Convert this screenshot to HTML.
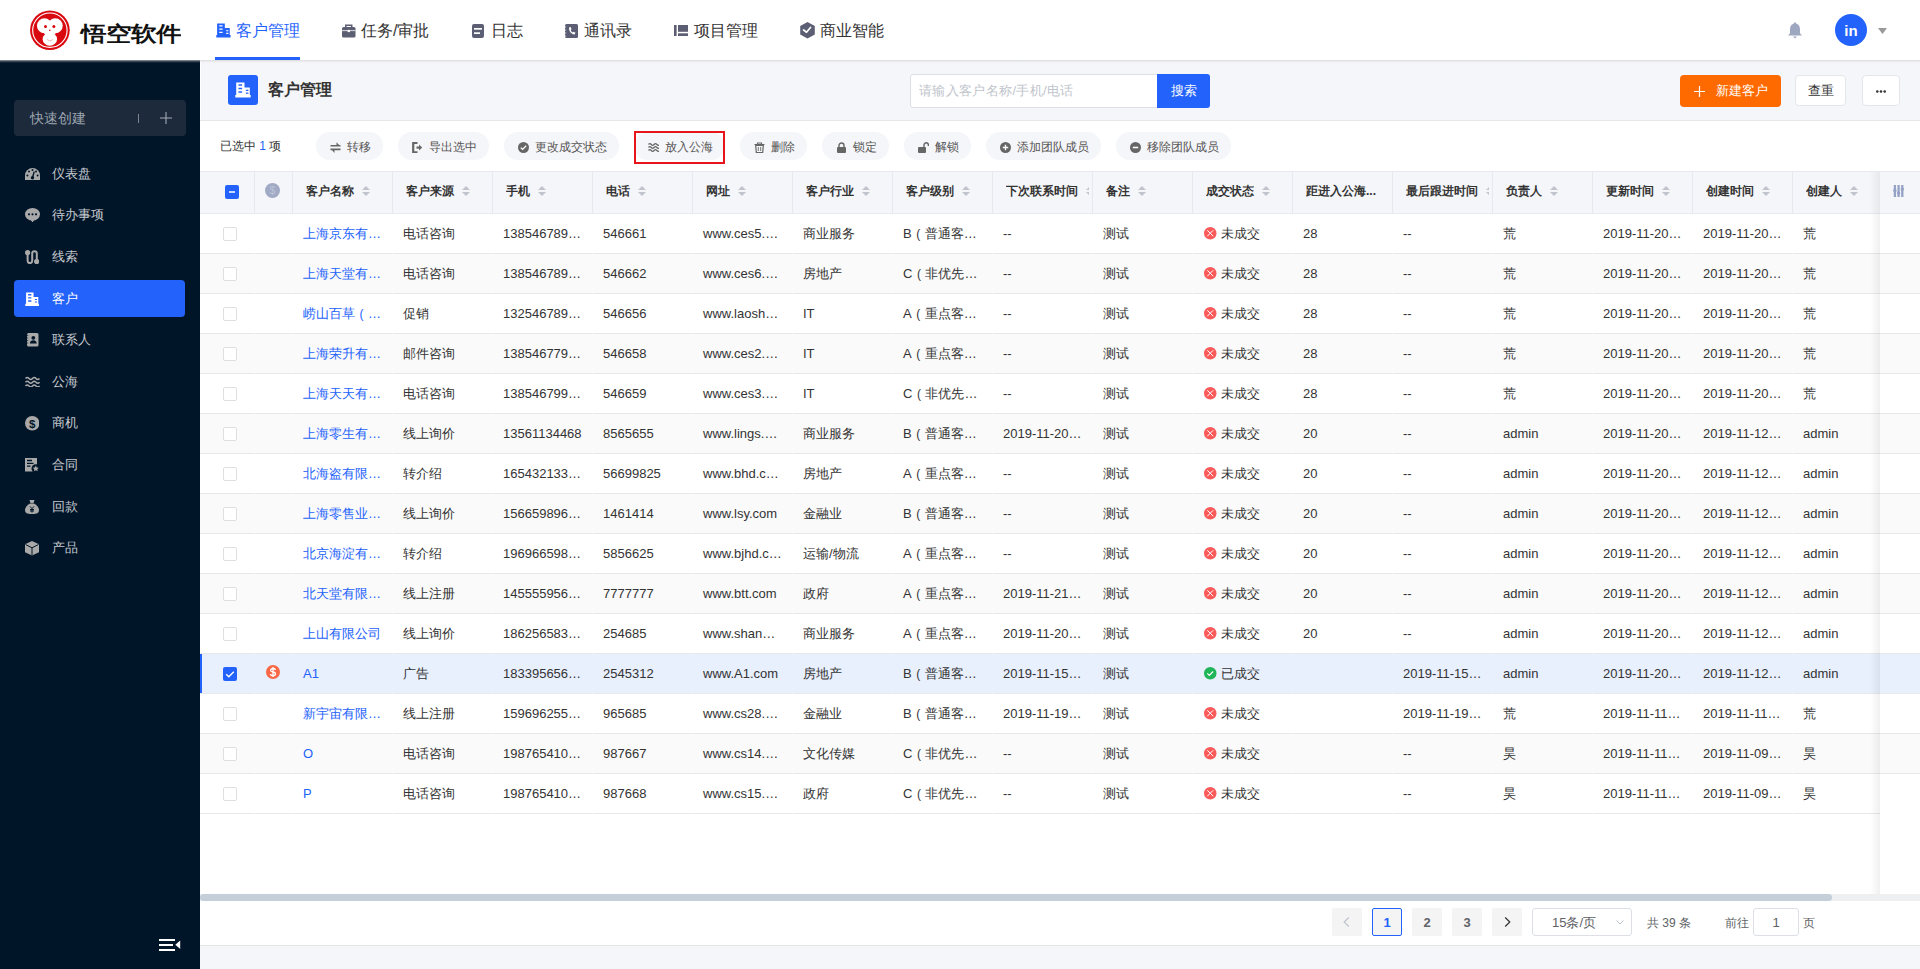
<!DOCTYPE html><html><head><meta charset="utf-8"><style>
html,body{margin:0;padding:0}
body{width:1920px;height:969px;overflow:hidden;position:relative;background:#f5f6f9;font-family:"Liberation Sans",sans-serif;}
.t{position:absolute;white-space:nowrap}
.b{position:absolute;box-sizing:border-box}
</style></head><body>
<div class="b" style="left:0px;top:0px;width:1920px;height:60px;background:#fff;z-index:2"></div>
<div style="position:absolute;left:0;top:0;width:1920px;height:60px;z-index:3">
<svg class="b" style="left:30px;top:10px;" width="40" height="40" viewBox="0 0 40 40"><circle cx="19.9" cy="20.2" r="19.8" fill="#d8090f"/>
<circle cx="19.9" cy="20.2" r="17.2" fill="none" stroke="#fff" stroke-width="1.1"/>
<circle cx="14.45" cy="15.7" r="7.5" fill="#fff"/><circle cx="25.25" cy="15.7" r="7.5" fill="#fff"/>
<ellipse cx="19.85" cy="20.5" rx="6.5" ry="5.5" fill="#fff"/>
<ellipse cx="19.85" cy="29.2" rx="7.2" ry="6.6" fill="#fff"/>
<circle cx="15.5" cy="16.6" r="1.5" fill="#d8090f"/><circle cx="23.9" cy="16.6" r="1.5" fill="#d8090f"/>
<circle cx="19.8" cy="20.3" r="0.8" fill="#d8090f"/>
<path d="M17.2 29.6 Q19.9 32.6 22.8 29.6" stroke="#e57a80" stroke-width="0.6" fill="none"/></svg>
<div class="t" style="left:81px;top:19.5px;font-size:25px;line-height:34px;color:#111;font-weight:bold;letter-spacing:0px;transform:scale(1.0,0.82);transform-origin:0 0">悟空软件</div>
<div class="t" style="left:236.0px;top:21px;font-size:16px;line-height:20px;color:#2362fb;font-weight:normal;">客户管理</div>
<div class="t" style="left:361.0px;top:21px;font-size:16px;line-height:20px;color:#333;font-weight:normal;">任务/审批</div>
<div class="t" style="left:491.3px;top:21px;font-size:16px;line-height:20px;color:#333;font-weight:normal;">日志</div>
<div class="t" style="left:583.6999999999999px;top:21px;font-size:16px;line-height:20px;color:#333;font-weight:normal;">通讯录</div>
<div class="t" style="left:693.5px;top:21px;font-size:16px;line-height:20px;color:#333;font-weight:normal;">项目管理</div>
<div class="t" style="left:820.1999999999999px;top:21px;font-size:16px;line-height:20px;color:#333;font-weight:normal;">商业智能</div>
<div class="b" style="left:215px;top:57px;width:85px;height:3px;background:#2362fb"></div>
<svg class="b" style="left:216px;top:23px;" width="14.88" height="14.88" viewBox="0 0 16 16"><path d="M1.2 0.5h8.3v13H1.2z M9.5 5.5h5.3v8H9.5z M0.3 13h15.4v2.5H0.3z" fill="#2362fb"/><path d="M3.5 2.3h3.6v1.5H3.5zM3.5 5.8h3.6v1.5H3.5zM3.5 9.3h3.6v1.5H3.5zM10.9 7.8h2.5v1.2h-2.5zM10.9 10.5h2.5v1.2h-2.5z" fill="#fff"/></svg>
<svg class="b" style="left:342px;top:24px;" width="13.5" height="13.5" viewBox="0 0 13.5 13.5"><path d="M3.8 3V1.2h5.9V3" stroke="#5c5f73" stroke-width="1.6" fill="none"/><rect x="0" y="3" width="13.5" height="10.5" rx="1.6" fill="#5c5f73"/><rect x="0" y="6.3" width="13.5" height=".8" fill="#fff"/><circle cx="6.75" cy="7" r="1.3" fill="#fff"/></svg>
<svg class="b" style="left:472px;top:23.5px;" width="12" height="14" viewBox="0 0 12 14"><rect x="0" y="0" width="12" height="14" rx="2" fill="#5c5f73"/><rect x="2" y="4" width="8" height="1.7" fill="#fff"/><rect x="2" y="8.3" width="6" height="1.7" fill="#fff"/></svg>
<svg class="b" style="left:565px;top:24px;" width="13" height="14" viewBox="0 0 13 14"><rect x="0" y="0" width="13" height="14" rx="1.5" fill="#5c5f73"/><path d="M4 3.5c0 4 2 6.5 5.5 7l1-1.8-2-1-.8.8c-1-.6-1.7-1.5-2-2.6l.8-.7-.8-2.2z" fill="#fff"/><path d="M0 3h1.2M0 6h1.2M0 9h1.2M0 12h1.2" stroke="#fff" stroke-width=".8"/></svg>
<svg class="b" style="left:674px;top:24.5px;" width="14" height="11.5" viewBox="0 0 14 11.5"><rect x="0" y="0" width="2.6" height="11.5" fill="#5c5f73"/><rect x="4" y="0" width="10" height="6.8" fill="#5c5f73"/><rect x="4" y="8.3" width="10" height="3.2" fill="#5c5f73"/></svg>
<svg class="b" style="left:800px;top:22px;" width="15" height="16.5" viewBox="0 0 15 16.5"><path d="M7.5 0L14.8 4.1v8.3L7.5 16.5 0.2 12.4V4.1z" fill="#5c5f73"/><path d="M3.6 8l2.9 2.2 4-4.7" stroke="#fff" stroke-width="1.7" fill="none" stroke-linejoin="round" stroke-linecap="round"/></svg>
<svg class="b" style="left:1787px;top:22px;" width="16" height="17" viewBox="0 0 16 17"><path d="M8 0.5c-.8 0-1.3.6-1.3 1.2C4 2.4 3 4.6 3 7.5v3.8L1 13.6h14l-2-2.3V7.5c0-2.9-1-5.1-3.7-5.8 0-.6-.5-1.2-1.3-1.2z" fill="#9ea7c0"/><path d="M6 14.5h4L8 16.5z" fill="#9ea7c0"/></svg>
<div class="b" style="left:1835px;top:14px;width:32px;height:32px;background:#2362fb;border-radius:50%"></div>
<div class="t" style="left:1835px;top:20.5px;font-size:15px;line-height:20px;color:#fff;font-weight:bold;width:32px;text-align:center">in</div>
<svg class="b" style="left:1878px;top:28px;" width="9" height="6" viewBox="0 0 9 6"><path d="M0 0h9L4.5 6z" fill="#999"/></svg>
</div>
<div class="b" style="left:0px;top:60px;width:200px;height:909px;background:#011529"></div>
<div class="b" style="left:14px;top:100px;width:172px;height:36px;background:#1c2a3c;border-radius:4px"></div>
<div class="t" style="left:29.5px;top:108px;font-size:14px;line-height:20px;color:#9ea5af;font-weight:normal;">快速创建</div>
<div class="b" style="left:138px;top:114px;width:1px;height:9px;background:#7d848e"></div>
<svg class="b" style="left:160px;top:112px;" width="12" height="12" viewBox="0 0 12 12"><path d="M6 0v12M0 6h12" stroke="#a3aab4" stroke-width="1.1"/></svg>
<div class="b" style="left:14px;top:280px;width:171px;height:37px;background:#2362fb;border-radius:4px"></div>
<div class="t" style="left:51.5px;top:164px;font-size:13px;line-height:20px;color:#c6c9ce;font-weight:normal;">仪表盘</div>
<div class="t" style="left:51.5px;top:205px;font-size:13px;line-height:20px;color:#c6c9ce;font-weight:normal;">待办事项</div>
<div class="t" style="left:51.5px;top:247px;font-size:13px;line-height:20px;color:#c6c9ce;font-weight:normal;">线索</div>
<div class="t" style="left:51.5px;top:289px;font-size:13px;line-height:20px;color:#fff;font-weight:normal;">客户</div>
<div class="t" style="left:51.5px;top:330px;font-size:13px;line-height:20px;color:#c6c9ce;font-weight:normal;">联系人</div>
<div class="t" style="left:51.5px;top:372px;font-size:13px;line-height:20px;color:#c6c9ce;font-weight:normal;">公海</div>
<div class="t" style="left:51.5px;top:413px;font-size:13px;line-height:20px;color:#c6c9ce;font-weight:normal;">商机</div>
<div class="t" style="left:51.5px;top:455px;font-size:13px;line-height:20px;color:#c6c9ce;font-weight:normal;">合同</div>
<div class="t" style="left:51.5px;top:497px;font-size:13px;line-height:20px;color:#c6c9ce;font-weight:normal;">回款</div>
<div class="t" style="left:51.5px;top:538px;font-size:13px;line-height:20px;color:#c6c9ce;font-weight:normal;">产品</div>
<svg class="b" style="left:24.5px;top:167.5px;" width="15" height="12.5" viewBox="0 0 15 12.5"><path d="M0 11.5V7.5A7.5 7.5 0 0 1 15 7.5V11.5Q15 12.5 14 12.5H1Q0 12.5 0 11.5z" fill="#a9a9a9"/><circle cx="2.4" cy="7.6" r="1" fill="#011529"/><circle cx="4" cy="3.6" r="1" fill="#011529"/><circle cx="7.5" cy="2" r="1" fill="#011529"/><circle cx="11" cy="3.6" r="1" fill="#011529"/><circle cx="12.6" cy="7.6" r="1" fill="#011529"/><path d="M7.5 9.8L9.2 3.6" stroke="#011529" stroke-width="1.4"/><circle cx="7.5" cy="9.8" r="1.7" fill="#011529"/></svg>
<svg class="b" style="left:24.5px;top:207.5px;" width="15" height="14.5" viewBox="0 0 15 14.5"><ellipse cx="7.5" cy="6.3" rx="7.5" ry="6.3" fill="#a9a9a9"/><path d="M5.5 11.5h4l-2 3z" fill="#a9a9a9"/><circle cx="4" cy="6.3" r="1.1" fill="#011529"/><circle cx="7.5" cy="6.3" r="1.1" fill="#011529"/><circle cx="11" cy="6.3" r="1.1" fill="#011529"/></svg>
<svg class="b" style="left:25px;top:249.5px;" width="14" height="14.5" viewBox="0 0 14 14.5"><path d="M2.6 3V10.8a2.3 2.3 0 0 0 4.6 0V3.6a2.3 2.3 0 0 1 4.6 0V10.5" stroke="#a9a9a9" stroke-width="2" fill="none"/><circle cx="2.6" cy="2.6" r="2.6" fill="#a9a9a9"/><circle cx="11.6" cy="11.6" r="2.6" fill="#a9a9a9"/></svg>
<svg class="b" style="left:25px;top:292px;" width="14.4" height="14.4" viewBox="0 0 16 16"><path d="M1.2 0.5h8.3v13H1.2z M9.5 5.5h5.3v8H9.5z M0.3 13h15.4v2.5H0.3z" fill="#fff"/><path d="M3.5 2.3h3.6v1.5H3.5zM3.5 5.8h3.6v1.5H3.5zM3.5 9.3h3.6v1.5H3.5zM10.9 7.8h2.5v1.2h-2.5zM10.9 10.5h2.5v1.2h-2.5z" fill="#2362fb"/></svg>
<svg class="b" style="left:26px;top:333px;" width="12.5" height="13.5" viewBox="0 0 12.5 13.5"><rect x="1" y="0" width="11.5" height="13.5" rx="1.5" fill="#a9a9a9"/><circle cx="7.3" cy="4.8" r="1.9" fill="#011529"/><path d="M3.8 10.5c.4-2.3 1.7-3.3 3.5-3.3s3.1 1 3.5 3.3z" fill="#011529"/><path d="M0 2.5h2.2M0 5h2.2M0 7.5h2.2M0 10h2.2" stroke="#011529" stroke-width=".7"/></svg>
<svg class="b" style="left:24.5px;top:375.5px;" width="15" height="11.5" viewBox="0 0 15 11.5"><path d="M0.5 2.5q1.7-2 3.5 0t3.5 0 3.5 0 3.5 0M0.5 6.2q1.7-2 3.5 0t3.5 0 3.5 0 3.5 0M0.5 9.9q1.7-2 3.5 0t3.5 0 3.5 0 3.5 0" stroke="#a9a9a9" stroke-width="1.5" fill="none"/></svg>
<svg class="b" style="left:24.5px;top:416px;" width="14.5" height="14.5" viewBox="0 0 14.5 14.5"><circle cx="7.25" cy="7.25" r="7.25" fill="#a9a9a9"/><text x="7.25" y="11.5" font-size="11.5" text-anchor="middle" fill="#011529" font-family="Liberation Sans" font-weight="bold">$</text></svg>
<svg class="b" style="left:25px;top:458px;" width="14.5" height="14" viewBox="0 0 14.5 14"><path d="M0 0h12v13.5H0z" fill="#a9a9a9"/><path d="M2 2.5h5M2 5.3h6.5M2 8.1h3.5" stroke="#011529" stroke-width="1.3"/><circle cx="10.8" cy="10.6" r="4.3" fill="#011529"/><path d="M10.8 7.6l.95 1.9 2.05.3-1.5 1.45.35 2.05-1.85-1-1.85 1 .35-2.05-1.5-1.45 2.05-.3z" fill="#a9a9a9"/></svg>
<svg class="b" style="left:25px;top:500px;" width="14" height="14" viewBox="0 0 14 14"><path d="M4.5 0h5L8.5 3h-3z" fill="#a9a9a9"/><path d="M5 3.5h4c3 1.5 5 4 5 6.5 0 3-2 4-7 4s-7-1-7-4c0-2.5 2-5 5-6.5z" fill="#a9a9a9"/><path d="M5 6.5l2 2 2-2M7 8.5v4M5 9.5h4M5 11h4" stroke="#011529" stroke-width="1" fill="none"/></svg>
<svg class="b" style="left:25px;top:541px;" width="14" height="14.5" viewBox="0 0 14 14.5"><path d="M7 0L14 3.3v8L7 14.5 0 11.3v-8z" fill="#a9a9a9"/><path d="M0.5 3.5L7 6.8 13.5 3.5M7 6.8v7.5" stroke="#011529" stroke-width="1" fill="none"/></svg>
<svg class="b" style="left:159px;top:938px;" width="22" height="14" viewBox="0 0 22 14"><path d="M0 2h16M0 7h14M0 12h16" stroke="#fff" stroke-width="2"/><path d="M21.2 2.6v8.5l-4.9-4.25z" fill="#fff"/></svg>
<div class="b" style="left:0px;top:60px;width:1920px;height:3px;background:linear-gradient(rgba(208,208,208,0.75),rgba(208,208,208,0.25) 50%,rgba(208,208,208,0));z-index:4"></div>
<div class="b" style="left:200px;top:60px;width:1px;height:885px;background:#fff"></div>
<div class="b" style="left:228px;top:75px;width:30px;height:30px;background:#2362fb;border-radius:3px"></div>
<svg class="b" style="left:235px;top:82px;" width="16.0" height="16.0" viewBox="0 0 16 16"><path d="M1.2 0.5h8.3v13H1.2z M9.5 5.5h5.3v8H9.5z M0.3 13h15.4v2.5H0.3z" fill="#fff"/><path d="M3.5 2.3h3.6v1.5H3.5zM3.5 5.8h3.6v1.5H3.5zM3.5 9.3h3.6v1.5H3.5zM10.9 7.8h2.5v1.2h-2.5zM10.9 10.5h2.5v1.2h-2.5z" fill="#2362fb"/></svg>
<div class="t" style="left:267.5px;top:80px;font-size:16px;line-height:20px;color:#333;font-weight:bold;">客户管理</div>
<div class="b" style="left:910px;top:74px;width:248px;height:34px;background:#fff;border:1px solid #dcdfe6;border-radius:3px 0 0 3px"></div>
<div class="t" style="left:919px;top:81px;font-size:13px;line-height:20px;color:#c0c4cc;font-weight:normal;letter-spacing:0.35px">请输入客户名称/手机/电话</div>
<div class="b" style="left:1157px;top:74px;width:53px;height:34px;background:#2362fb;border-radius:0 3px 3px 0"></div>
<div class="t" style="left:1157px;top:81px;font-size:13px;line-height:20px;color:#fff;font-weight:normal;width:53px;text-align:center">搜索</div>
<div class="b" style="left:1680px;top:75px;width:101px;height:32px;background:#ff6a00;border-radius:4px"></div>
<svg class="b" style="left:1694px;top:86px;" width="11" height="11" viewBox="0 0 11 11"><path d="M5.5 0v11M0 5.5h11" stroke="#fff" stroke-width="1.2"/></svg>
<div class="t" style="left:1715.5px;top:81px;font-size:13px;line-height:20px;color:#fff;font-weight:normal;">新建客户</div>
<div class="b" style="left:1795px;top:75px;width:51px;height:31px;background:#fff;border:1px solid #e4e6ea;border-radius:4px"></div>
<div class="t" style="left:1795px;top:80.5px;font-size:13px;line-height:20px;color:#333;font-weight:normal;width:51px;text-align:center">查重</div>
<div class="b" style="left:1862px;top:75px;width:38px;height:31px;background:#fff;border:1px solid #e4e6ea;border-radius:4px"></div>
<svg class="b" style="left:1876px;top:89.5px;" width="10" height="3" viewBox="0 0 10 3"><circle cx="1.3" cy="1.5" r="1.3" fill="#333"/><circle cx="5" cy="1.5" r="1.3" fill="#333"/><circle cx="8.7" cy="1.5" r="1.3" fill="#333"/></svg>
<div class="b" style="left:200px;top:120px;width:1720px;height:826px;background:#fff;border-top:1px solid #e6e6e6;border-bottom:1px solid #e6e6e6"></div>
<div class="t" style="left:220px;top:136px;font-size:12px;line-height:20px;color:#333">已选中 <span style="color:#2362fb">1</span> 项</div>
<div class="b" style="left:316px;top:132px;width:67px;height:28px;background:#f5f6f9;border-radius:14px"></div>
<svg class="b" style="left:330px;top:142px;" width="11" height="11" viewBox="0 0 11 11"><path d="M0.5 3h10v1.6H0.5z M6.5 0.2L10.5 4.6H6.5z M0.5 6.6h10v1.6H0.5z M4.5 10.9L0.5 6.6H4.5z" fill="#666"/></svg>
<div class="t" style="left:346.5px;top:137px;font-size:12px;line-height:20px;color:#555;font-weight:normal;">转移</div>
<div class="b" style="left:398px;top:132px;width:91px;height:28px;background:#f5f6f9;border-radius:14px"></div>
<svg class="b" style="left:412px;top:142px;" width="11" height="11" viewBox="0 0 11 11"><path d="M5.5 0.8H1.2v9.6h4.3" stroke="#666" stroke-width="2.2" fill="none" stroke-linejoin="round"/><path d="M4.5 5.6h3" stroke="#666" stroke-width="2.2"/><path d="M7 2.6l3.2 3-3.2 3z" fill="#666"/></svg>
<div class="t" style="left:428.5px;top:137px;font-size:12px;line-height:20px;color:#555;font-weight:normal;">导出选中</div>
<div class="b" style="left:504px;top:132px;width:115px;height:28px;background:#f5f6f9;border-radius:14px"></div>
<svg class="b" style="left:518px;top:142px;" width="11" height="11" viewBox="0 0 11 11"><circle cx="5.5" cy="5.5" r="5.5" fill="#666"/><path d="M2.8 5.6l1.8 1.8 3.6-3.6" stroke="#fff" stroke-width="1.3" fill="none"/></svg>
<div class="t" style="left:534.5px;top:137px;font-size:12px;line-height:20px;color:#555;font-weight:normal;">更改成交状态</div>
<div class="b" style="left:634px;top:132px;width:91px;height:28px;background:#f5f6f9;border-radius:14px"></div>
<svg class="b" style="left:648px;top:142px;" width="11" height="11" viewBox="0 0 11 11"><path d="M0.5 2.5q1.4-1.6 2.8 0t2.8 0 2.8 0 2.6 0M0.5 5.5q1.4-1.6 2.8 0t2.8 0 2.8 0 2.6 0M0.5 8.5q1.4-1.6 2.8 0t2.8 0 2.8 0 2.6 0" stroke="#666" stroke-width="1.2" fill="none"/></svg>
<div class="t" style="left:664.5px;top:137px;font-size:12px;line-height:20px;color:#555;font-weight:normal;">放入公海</div>
<div class="b" style="left:740px;top:132px;width:67px;height:28px;background:#f5f6f9;border-radius:14px"></div>
<svg class="b" style="left:754px;top:142px;" width="11" height="11" viewBox="0 0 11 11"><path d="M0.5 2.5h10M3.5 2.5V1h4v1.5" stroke="#666" stroke-width="1.1" fill="none"/><path d="M1.7 3.5h7.6l-.6 7H2.3z" stroke="#666" stroke-width="1.2" fill="none"/><path d="M4.3 5v4M6.7 5v4" stroke="#666" stroke-width=".9"/></svg>
<div class="t" style="left:770.5px;top:137px;font-size:12px;line-height:20px;color:#555;font-weight:normal;">删除</div>
<div class="b" style="left:822px;top:132px;width:67px;height:28px;background:#f5f6f9;border-radius:14px"></div>
<svg class="b" style="left:836px;top:142px;" width="11" height="11" viewBox="0 0 11 11"><path d="M3 5V3.5a2.5 2.5 0 0 1 5 0V5" stroke="#666" stroke-width="1.4" fill="none"/><rect x="1" y="5" width="9" height="6" rx="1" fill="#666"/></svg>
<div class="t" style="left:852.5px;top:137px;font-size:12px;line-height:20px;color:#555;font-weight:normal;">锁定</div>
<div class="b" style="left:904px;top:132px;width:67px;height:28px;background:#f5f6f9;border-radius:14px"></div>
<svg class="b" style="left:918px;top:142px;" width="11" height="11" viewBox="0 0 11 11"><path d="M6 5V3a2.2 2.2 0 0 1 4.4 0V4" stroke="#666" stroke-width="1.4" fill="none"/><rect x="0" y="5" width="8" height="6" rx="1" fill="#666"/></svg>
<div class="t" style="left:934.5px;top:137px;font-size:12px;line-height:20px;color:#555;font-weight:normal;">解锁</div>
<div class="b" style="left:986px;top:132px;width:115px;height:28px;background:#f5f6f9;border-radius:14px"></div>
<svg class="b" style="left:1000px;top:142px;" width="11" height="11" viewBox="0 0 11 11"><circle cx="5.5" cy="5.5" r="5.5" fill="#666"/><path d="M5.5 2.8v5.4M2.8 5.5h5.4" stroke="#fff" stroke-width="1.4"/></svg>
<div class="t" style="left:1016.5px;top:137px;font-size:12px;line-height:20px;color:#555;font-weight:normal;">添加团队成员</div>
<div class="b" style="left:1116px;top:132px;width:115px;height:28px;background:#f5f6f9;border-radius:14px"></div>
<svg class="b" style="left:1130px;top:142px;" width="11" height="11" viewBox="0 0 11 11"><circle cx="5.5" cy="5.5" r="5.5" fill="#666"/><path d="M2.8 5.5h5.4" stroke="#fff" stroke-width="1.6"/></svg>
<div class="t" style="left:1146.5px;top:137px;font-size:12px;line-height:20px;color:#555;font-weight:normal;">移除团队成员</div>
<div class="b" style="left:634px;top:131px;width:91px;height:33px;border:2px solid #e8141b"></div>
<div class="b" style="left:200px;top:171px;width:1720px;height:43px;background:#f5f6f9;border-top:1px solid #e6e9ef;border-bottom:1px solid #e6e9ef"></div>
<div class="b" style="left:254px;top:172px;width:1px;height:41px;background:#e6e9ef"></div>
<div class="b" style="left:292px;top:172px;width:1px;height:41px;background:#e6e9ef"></div>
<div class="b" style="left:392px;top:172px;width:1px;height:41px;background:#e6e9ef"></div>
<div class="b" style="left:492px;top:172px;width:1px;height:41px;background:#e6e9ef"></div>
<div class="b" style="left:592px;top:172px;width:1px;height:41px;background:#e6e9ef"></div>
<div class="b" style="left:692px;top:172px;width:1px;height:41px;background:#e6e9ef"></div>
<div class="b" style="left:792px;top:172px;width:1px;height:41px;background:#e6e9ef"></div>
<div class="b" style="left:892px;top:172px;width:1px;height:41px;background:#e6e9ef"></div>
<div class="b" style="left:992px;top:172px;width:1px;height:41px;background:#e6e9ef"></div>
<div class="b" style="left:1092px;top:172px;width:1px;height:41px;background:#e6e9ef"></div>
<div class="b" style="left:1192px;top:172px;width:1px;height:41px;background:#e6e9ef"></div>
<div class="b" style="left:1292px;top:172px;width:1px;height:41px;background:#e6e9ef"></div>
<div class="b" style="left:1392px;top:172px;width:1px;height:41px;background:#e6e9ef"></div>
<div class="b" style="left:1492px;top:172px;width:1px;height:41px;background:#e6e9ef"></div>
<div class="b" style="left:1592px;top:172px;width:1px;height:41px;background:#e6e9ef"></div>
<div class="b" style="left:1692px;top:172px;width:1px;height:41px;background:#e6e9ef"></div>
<div class="b" style="left:1792px;top:172px;width:1px;height:41px;background:#e6e9ef"></div>
<div class="b" style="left:225px;top:185px;width:14px;height:14px;background:#2362fb;border-radius:2px"></div>
<div class="b" style="left:229px;top:191px;width:6px;height:2px;background:#c8d6ff"></div>
<svg class="b" style="left:265.3px;top:183.3px;" width="15" height="15" viewBox="0 0 15 15"><circle cx="7.5" cy="7.5" r="7.5" fill="#a0aac4"/><text x="7.5" y="11.3" font-size="10.5" text-anchor="middle" fill="#bcc4d8" font-family="Liberation Sans">$</text></svg>
<div class="t" style="left:306px;top:181px;width:83px;overflow:hidden;font-size:12px;line-height:20px;color:#333;font-weight:bold">客户名称<svg width="8" height="10" style="margin-left:7.5px;vertical-align:-1px" viewBox="0 0 8 10"><path d="M0 4L4 0 8 4z M0 6h8L4 10z" fill="#c0c4cc"/></svg></div>
<div class="t" style="left:406px;top:181px;width:83px;overflow:hidden;font-size:12px;line-height:20px;color:#333;font-weight:bold">客户来源<svg width="8" height="10" style="margin-left:7.5px;vertical-align:-1px" viewBox="0 0 8 10"><path d="M0 4L4 0 8 4z M0 6h8L4 10z" fill="#c0c4cc"/></svg></div>
<div class="t" style="left:506px;top:181px;width:83px;overflow:hidden;font-size:12px;line-height:20px;color:#333;font-weight:bold">手机<svg width="8" height="10" style="margin-left:7.5px;vertical-align:-1px" viewBox="0 0 8 10"><path d="M0 4L4 0 8 4z M0 6h8L4 10z" fill="#c0c4cc"/></svg></div>
<div class="t" style="left:606px;top:181px;width:83px;overflow:hidden;font-size:12px;line-height:20px;color:#333;font-weight:bold">电话<svg width="8" height="10" style="margin-left:7.5px;vertical-align:-1px" viewBox="0 0 8 10"><path d="M0 4L4 0 8 4z M0 6h8L4 10z" fill="#c0c4cc"/></svg></div>
<div class="t" style="left:706px;top:181px;width:83px;overflow:hidden;font-size:12px;line-height:20px;color:#333;font-weight:bold">网址<svg width="8" height="10" style="margin-left:7.5px;vertical-align:-1px" viewBox="0 0 8 10"><path d="M0 4L4 0 8 4z M0 6h8L4 10z" fill="#c0c4cc"/></svg></div>
<div class="t" style="left:806px;top:181px;width:83px;overflow:hidden;font-size:12px;line-height:20px;color:#333;font-weight:bold">客户行业<svg width="8" height="10" style="margin-left:7.5px;vertical-align:-1px" viewBox="0 0 8 10"><path d="M0 4L4 0 8 4z M0 6h8L4 10z" fill="#c0c4cc"/></svg></div>
<div class="t" style="left:906px;top:181px;width:83px;overflow:hidden;font-size:12px;line-height:20px;color:#333;font-weight:bold">客户级别<svg width="8" height="10" style="margin-left:7.5px;vertical-align:-1px" viewBox="0 0 8 10"><path d="M0 4L4 0 8 4z M0 6h8L4 10z" fill="#c0c4cc"/></svg></div>
<div class="t" style="left:1006px;top:181px;width:83px;overflow:hidden;font-size:12px;line-height:20px;color:#333;font-weight:bold">下次联系时间<svg width="8" height="10" style="margin-left:7.5px;vertical-align:-1px" viewBox="0 0 8 10"><path d="M0 4L4 0 8 4z M0 6h8L4 10z" fill="#c0c4cc"/></svg></div>
<div class="t" style="left:1106px;top:181px;width:83px;overflow:hidden;font-size:12px;line-height:20px;color:#333;font-weight:bold">备注<svg width="8" height="10" style="margin-left:7.5px;vertical-align:-1px" viewBox="0 0 8 10"><path d="M0 4L4 0 8 4z M0 6h8L4 10z" fill="#c0c4cc"/></svg></div>
<div class="t" style="left:1206px;top:181px;width:83px;overflow:hidden;font-size:12px;line-height:20px;color:#333;font-weight:bold">成交状态<svg width="8" height="10" style="margin-left:7.5px;vertical-align:-1px" viewBox="0 0 8 10"><path d="M0 4L4 0 8 4z M0 6h8L4 10z" fill="#c0c4cc"/></svg></div>
<div class="t" style="left:1306px;top:181px;width:83px;overflow:hidden;font-size:12px;line-height:20px;color:#333;font-weight:bold">距进入公海...</div>
<div class="t" style="left:1406px;top:181px;width:83px;overflow:hidden;font-size:12px;line-height:20px;color:#333;font-weight:bold">最后跟进时间<svg width="8" height="10" style="margin-left:7.5px;vertical-align:-1px" viewBox="0 0 8 10"><path d="M0 4L4 0 8 4z M0 6h8L4 10z" fill="#c0c4cc"/></svg></div>
<div class="t" style="left:1506px;top:181px;width:83px;overflow:hidden;font-size:12px;line-height:20px;color:#333;font-weight:bold">负责人<svg width="8" height="10" style="margin-left:7.5px;vertical-align:-1px" viewBox="0 0 8 10"><path d="M0 4L4 0 8 4z M0 6h8L4 10z" fill="#c0c4cc"/></svg></div>
<div class="t" style="left:1606px;top:181px;width:83px;overflow:hidden;font-size:12px;line-height:20px;color:#333;font-weight:bold">更新时间<svg width="8" height="10" style="margin-left:7.5px;vertical-align:-1px" viewBox="0 0 8 10"><path d="M0 4L4 0 8 4z M0 6h8L4 10z" fill="#c0c4cc"/></svg></div>
<div class="t" style="left:1706px;top:181px;width:83px;overflow:hidden;font-size:12px;line-height:20px;color:#333;font-weight:bold">创建时间<svg width="8" height="10" style="margin-left:7.5px;vertical-align:-1px" viewBox="0 0 8 10"><path d="M0 4L4 0 8 4z M0 6h8L4 10z" fill="#c0c4cc"/></svg></div>
<div class="t" style="left:1806px;top:181px;width:83px;overflow:hidden;font-size:12px;line-height:20px;color:#333;font-weight:bold">创建人<svg width="8" height="10" style="margin-left:7.5px;vertical-align:-1px" viewBox="0 0 8 10"><path d="M0 4L4 0 8 4z M0 6h8L4 10z" fill="#c0c4cc"/></svg></div>
<div class="b" style="left:1880px;top:171px;width:40px;height:43px;background:#f5f6f9;border-top:1px solid #e6e9ef;border-bottom:1px solid #e6e9ef"></div>
<svg class="b" style="left:1892.5px;top:185px;" width="12" height="12" viewBox="0 0 12 12"><path d="M1.9 0v12M5.6 0v12M9.3 0v12" stroke="#94a2c6" stroke-width="2.3"/><path d="M0.4 5.5h3M4.1 8h3M7.8 4.2h3" stroke="#94a2c6" stroke-width="2.4"/></svg>
<div class="b" style="left:200px;top:214px;width:1720px;height:40px;background:#fff;border-bottom:1px solid #e8e8e8"></div>
<div class="b" style="left:223px;top:227px;width:14px;height:14px;background:#fff;border:1px solid #dfdfdf;border-radius:2px"></div>
<div class="t" style="left:303px;top:224px;font-size:13px;line-height:20px;color:#2362fb;font-weight:normal;">上海京东有…</div>
<div class="t" style="left:403px;top:224px;font-size:13px;line-height:20px;color:#333;font-weight:normal;">电话咨询</div>
<div class="t" style="left:503px;top:224px;font-size:13px;line-height:20px;color:#333;font-weight:normal;">138546789…</div>
<div class="t" style="left:603px;top:224px;font-size:13px;line-height:20px;color:#333;font-weight:normal;">546661</div>
<div class="t" style="left:703px;top:224px;font-size:13px;line-height:20px;color:#333;font-weight:normal;">www.ces5.…</div>
<div class="t" style="left:803px;top:224px;font-size:13px;line-height:20px;color:#333;font-weight:normal;">商业服务</div>
<div class="t" style="left:903px;top:224px;font-size:13px;line-height:20px;color:#333;font-weight:normal;">B<span style="display:inline-block;width:13px;text-indent:4.5px;font-size:12px">(</span>普通客…</div>
<div class="t" style="left:1003px;top:224px;font-size:13px;line-height:20px;color:#333;font-weight:normal;">--</div>
<div class="t" style="left:1103px;top:224px;font-size:13px;line-height:20px;color:#333;font-weight:normal;">测试</div>
<svg class="b" style="left:1204px;top:227px;" width="12.5" height="12.5" viewBox="0 0 12.5 12.5"><circle cx="6.25" cy="6.25" r="6.25" fill="#f95b5b"/><path d="M3.3 3.3l5.9 5.9M9.2 3.3l-5.9 5.9" stroke="#fff" stroke-width="1" fill="none"/></svg>
<div class="t" style="left:1220.5px;top:224px;font-size:13px;line-height:20px;color:#333;font-weight:normal;">未成交</div>
<div class="t" style="left:1303px;top:224px;font-size:13px;line-height:20px;color:#333;font-weight:normal;">28</div>
<div class="t" style="left:1403px;top:224px;font-size:13px;line-height:20px;color:#333;font-weight:normal;">--</div>
<div class="t" style="left:1503px;top:224px;font-size:13px;line-height:20px;color:#333;font-weight:normal;">荒</div>
<div class="t" style="left:1603px;top:224px;font-size:13px;line-height:20px;color:#333;font-weight:normal;">2019-11-20…</div>
<div class="t" style="left:1703px;top:224px;font-size:13px;line-height:20px;color:#333;font-weight:normal;">2019-11-20…</div>
<div class="t" style="left:1803px;top:224px;font-size:13px;line-height:20px;color:#333;font-weight:normal;">荒</div>
<div class="b" style="left:200px;top:254px;width:1720px;height:40px;background:#fafafa;border-bottom:1px solid #e8e8e8"></div>
<div class="b" style="left:223px;top:267px;width:14px;height:14px;background:#fff;border:1px solid #dfdfdf;border-radius:2px"></div>
<div class="t" style="left:303px;top:264px;font-size:13px;line-height:20px;color:#2362fb;font-weight:normal;">上海天堂有…</div>
<div class="t" style="left:403px;top:264px;font-size:13px;line-height:20px;color:#333;font-weight:normal;">电话咨询</div>
<div class="t" style="left:503px;top:264px;font-size:13px;line-height:20px;color:#333;font-weight:normal;">138546789…</div>
<div class="t" style="left:603px;top:264px;font-size:13px;line-height:20px;color:#333;font-weight:normal;">546662</div>
<div class="t" style="left:703px;top:264px;font-size:13px;line-height:20px;color:#333;font-weight:normal;">www.ces6.…</div>
<div class="t" style="left:803px;top:264px;font-size:13px;line-height:20px;color:#333;font-weight:normal;">房地产</div>
<div class="t" style="left:903px;top:264px;font-size:13px;line-height:20px;color:#333;font-weight:normal;">C<span style="display:inline-block;width:13px;text-indent:4.5px;font-size:12px">(</span>非优先…</div>
<div class="t" style="left:1003px;top:264px;font-size:13px;line-height:20px;color:#333;font-weight:normal;">--</div>
<div class="t" style="left:1103px;top:264px;font-size:13px;line-height:20px;color:#333;font-weight:normal;">测试</div>
<svg class="b" style="left:1204px;top:267px;" width="12.5" height="12.5" viewBox="0 0 12.5 12.5"><circle cx="6.25" cy="6.25" r="6.25" fill="#f95b5b"/><path d="M3.3 3.3l5.9 5.9M9.2 3.3l-5.9 5.9" stroke="#fff" stroke-width="1" fill="none"/></svg>
<div class="t" style="left:1220.5px;top:264px;font-size:13px;line-height:20px;color:#333;font-weight:normal;">未成交</div>
<div class="t" style="left:1303px;top:264px;font-size:13px;line-height:20px;color:#333;font-weight:normal;">28</div>
<div class="t" style="left:1403px;top:264px;font-size:13px;line-height:20px;color:#333;font-weight:normal;">--</div>
<div class="t" style="left:1503px;top:264px;font-size:13px;line-height:20px;color:#333;font-weight:normal;">荒</div>
<div class="t" style="left:1603px;top:264px;font-size:13px;line-height:20px;color:#333;font-weight:normal;">2019-11-20…</div>
<div class="t" style="left:1703px;top:264px;font-size:13px;line-height:20px;color:#333;font-weight:normal;">2019-11-20…</div>
<div class="t" style="left:1803px;top:264px;font-size:13px;line-height:20px;color:#333;font-weight:normal;">荒</div>
<div class="b" style="left:200px;top:294px;width:1720px;height:40px;background:#fff;border-bottom:1px solid #e8e8e8"></div>
<div class="b" style="left:223px;top:307px;width:14px;height:14px;background:#fff;border:1px solid #dfdfdf;border-radius:2px"></div>
<div class="t" style="left:303px;top:304px;font-size:13px;line-height:20px;color:#2362fb;font-weight:normal;">崂山百草<span style="display:inline-block;width:13px;text-indent:4.5px;font-size:12px">(</span>…</div>
<div class="t" style="left:403px;top:304px;font-size:13px;line-height:20px;color:#333;font-weight:normal;">促销</div>
<div class="t" style="left:503px;top:304px;font-size:13px;line-height:20px;color:#333;font-weight:normal;">132546789…</div>
<div class="t" style="left:603px;top:304px;font-size:13px;line-height:20px;color:#333;font-weight:normal;">546656</div>
<div class="t" style="left:703px;top:304px;font-size:13px;line-height:20px;color:#333;font-weight:normal;">www.laosh…</div>
<div class="t" style="left:803px;top:304px;font-size:13px;line-height:20px;color:#333;font-weight:normal;">IT</div>
<div class="t" style="left:903px;top:304px;font-size:13px;line-height:20px;color:#333;font-weight:normal;">A<span style="display:inline-block;width:13px;text-indent:4.5px;font-size:12px">(</span>重点客…</div>
<div class="t" style="left:1003px;top:304px;font-size:13px;line-height:20px;color:#333;font-weight:normal;">--</div>
<div class="t" style="left:1103px;top:304px;font-size:13px;line-height:20px;color:#333;font-weight:normal;">测试</div>
<svg class="b" style="left:1204px;top:307px;" width="12.5" height="12.5" viewBox="0 0 12.5 12.5"><circle cx="6.25" cy="6.25" r="6.25" fill="#f95b5b"/><path d="M3.3 3.3l5.9 5.9M9.2 3.3l-5.9 5.9" stroke="#fff" stroke-width="1" fill="none"/></svg>
<div class="t" style="left:1220.5px;top:304px;font-size:13px;line-height:20px;color:#333;font-weight:normal;">未成交</div>
<div class="t" style="left:1303px;top:304px;font-size:13px;line-height:20px;color:#333;font-weight:normal;">28</div>
<div class="t" style="left:1403px;top:304px;font-size:13px;line-height:20px;color:#333;font-weight:normal;">--</div>
<div class="t" style="left:1503px;top:304px;font-size:13px;line-height:20px;color:#333;font-weight:normal;">荒</div>
<div class="t" style="left:1603px;top:304px;font-size:13px;line-height:20px;color:#333;font-weight:normal;">2019-11-20…</div>
<div class="t" style="left:1703px;top:304px;font-size:13px;line-height:20px;color:#333;font-weight:normal;">2019-11-20…</div>
<div class="t" style="left:1803px;top:304px;font-size:13px;line-height:20px;color:#333;font-weight:normal;">荒</div>
<div class="b" style="left:200px;top:334px;width:1720px;height:40px;background:#fafafa;border-bottom:1px solid #e8e8e8"></div>
<div class="b" style="left:223px;top:347px;width:14px;height:14px;background:#fff;border:1px solid #dfdfdf;border-radius:2px"></div>
<div class="t" style="left:303px;top:344px;font-size:13px;line-height:20px;color:#2362fb;font-weight:normal;">上海荣升有…</div>
<div class="t" style="left:403px;top:344px;font-size:13px;line-height:20px;color:#333;font-weight:normal;">邮件咨询</div>
<div class="t" style="left:503px;top:344px;font-size:13px;line-height:20px;color:#333;font-weight:normal;">138546779…</div>
<div class="t" style="left:603px;top:344px;font-size:13px;line-height:20px;color:#333;font-weight:normal;">546658</div>
<div class="t" style="left:703px;top:344px;font-size:13px;line-height:20px;color:#333;font-weight:normal;">www.ces2.…</div>
<div class="t" style="left:803px;top:344px;font-size:13px;line-height:20px;color:#333;font-weight:normal;">IT</div>
<div class="t" style="left:903px;top:344px;font-size:13px;line-height:20px;color:#333;font-weight:normal;">A<span style="display:inline-block;width:13px;text-indent:4.5px;font-size:12px">(</span>重点客…</div>
<div class="t" style="left:1003px;top:344px;font-size:13px;line-height:20px;color:#333;font-weight:normal;">--</div>
<div class="t" style="left:1103px;top:344px;font-size:13px;line-height:20px;color:#333;font-weight:normal;">测试</div>
<svg class="b" style="left:1204px;top:347px;" width="12.5" height="12.5" viewBox="0 0 12.5 12.5"><circle cx="6.25" cy="6.25" r="6.25" fill="#f95b5b"/><path d="M3.3 3.3l5.9 5.9M9.2 3.3l-5.9 5.9" stroke="#fff" stroke-width="1" fill="none"/></svg>
<div class="t" style="left:1220.5px;top:344px;font-size:13px;line-height:20px;color:#333;font-weight:normal;">未成交</div>
<div class="t" style="left:1303px;top:344px;font-size:13px;line-height:20px;color:#333;font-weight:normal;">28</div>
<div class="t" style="left:1403px;top:344px;font-size:13px;line-height:20px;color:#333;font-weight:normal;">--</div>
<div class="t" style="left:1503px;top:344px;font-size:13px;line-height:20px;color:#333;font-weight:normal;">荒</div>
<div class="t" style="left:1603px;top:344px;font-size:13px;line-height:20px;color:#333;font-weight:normal;">2019-11-20…</div>
<div class="t" style="left:1703px;top:344px;font-size:13px;line-height:20px;color:#333;font-weight:normal;">2019-11-20…</div>
<div class="t" style="left:1803px;top:344px;font-size:13px;line-height:20px;color:#333;font-weight:normal;">荒</div>
<div class="b" style="left:200px;top:374px;width:1720px;height:40px;background:#fff;border-bottom:1px solid #e8e8e8"></div>
<div class="b" style="left:223px;top:387px;width:14px;height:14px;background:#fff;border:1px solid #dfdfdf;border-radius:2px"></div>
<div class="t" style="left:303px;top:384px;font-size:13px;line-height:20px;color:#2362fb;font-weight:normal;">上海天天有…</div>
<div class="t" style="left:403px;top:384px;font-size:13px;line-height:20px;color:#333;font-weight:normal;">电话咨询</div>
<div class="t" style="left:503px;top:384px;font-size:13px;line-height:20px;color:#333;font-weight:normal;">138546799…</div>
<div class="t" style="left:603px;top:384px;font-size:13px;line-height:20px;color:#333;font-weight:normal;">546659</div>
<div class="t" style="left:703px;top:384px;font-size:13px;line-height:20px;color:#333;font-weight:normal;">www.ces3.…</div>
<div class="t" style="left:803px;top:384px;font-size:13px;line-height:20px;color:#333;font-weight:normal;">IT</div>
<div class="t" style="left:903px;top:384px;font-size:13px;line-height:20px;color:#333;font-weight:normal;">C<span style="display:inline-block;width:13px;text-indent:4.5px;font-size:12px">(</span>非优先…</div>
<div class="t" style="left:1003px;top:384px;font-size:13px;line-height:20px;color:#333;font-weight:normal;">--</div>
<div class="t" style="left:1103px;top:384px;font-size:13px;line-height:20px;color:#333;font-weight:normal;">测试</div>
<svg class="b" style="left:1204px;top:387px;" width="12.5" height="12.5" viewBox="0 0 12.5 12.5"><circle cx="6.25" cy="6.25" r="6.25" fill="#f95b5b"/><path d="M3.3 3.3l5.9 5.9M9.2 3.3l-5.9 5.9" stroke="#fff" stroke-width="1" fill="none"/></svg>
<div class="t" style="left:1220.5px;top:384px;font-size:13px;line-height:20px;color:#333;font-weight:normal;">未成交</div>
<div class="t" style="left:1303px;top:384px;font-size:13px;line-height:20px;color:#333;font-weight:normal;">28</div>
<div class="t" style="left:1403px;top:384px;font-size:13px;line-height:20px;color:#333;font-weight:normal;">--</div>
<div class="t" style="left:1503px;top:384px;font-size:13px;line-height:20px;color:#333;font-weight:normal;">荒</div>
<div class="t" style="left:1603px;top:384px;font-size:13px;line-height:20px;color:#333;font-weight:normal;">2019-11-20…</div>
<div class="t" style="left:1703px;top:384px;font-size:13px;line-height:20px;color:#333;font-weight:normal;">2019-11-20…</div>
<div class="t" style="left:1803px;top:384px;font-size:13px;line-height:20px;color:#333;font-weight:normal;">荒</div>
<div class="b" style="left:200px;top:414px;width:1720px;height:40px;background:#fafafa;border-bottom:1px solid #e8e8e8"></div>
<div class="b" style="left:223px;top:427px;width:14px;height:14px;background:#fff;border:1px solid #dfdfdf;border-radius:2px"></div>
<div class="t" style="left:303px;top:424px;font-size:13px;line-height:20px;color:#2362fb;font-weight:normal;">上海零生有…</div>
<div class="t" style="left:403px;top:424px;font-size:13px;line-height:20px;color:#333;font-weight:normal;">线上询价</div>
<div class="t" style="left:503px;top:424px;font-size:13px;line-height:20px;color:#333;font-weight:normal;">13561134468</div>
<div class="t" style="left:603px;top:424px;font-size:13px;line-height:20px;color:#333;font-weight:normal;">8565655</div>
<div class="t" style="left:703px;top:424px;font-size:13px;line-height:20px;color:#333;font-weight:normal;">www.lings.…</div>
<div class="t" style="left:803px;top:424px;font-size:13px;line-height:20px;color:#333;font-weight:normal;">商业服务</div>
<div class="t" style="left:903px;top:424px;font-size:13px;line-height:20px;color:#333;font-weight:normal;">B<span style="display:inline-block;width:13px;text-indent:4.5px;font-size:12px">(</span>普通客…</div>
<div class="t" style="left:1003px;top:424px;font-size:13px;line-height:20px;color:#333;font-weight:normal;">2019-11-20…</div>
<div class="t" style="left:1103px;top:424px;font-size:13px;line-height:20px;color:#333;font-weight:normal;">测试</div>
<svg class="b" style="left:1204px;top:427px;" width="12.5" height="12.5" viewBox="0 0 12.5 12.5"><circle cx="6.25" cy="6.25" r="6.25" fill="#f95b5b"/><path d="M3.3 3.3l5.9 5.9M9.2 3.3l-5.9 5.9" stroke="#fff" stroke-width="1" fill="none"/></svg>
<div class="t" style="left:1220.5px;top:424px;font-size:13px;line-height:20px;color:#333;font-weight:normal;">未成交</div>
<div class="t" style="left:1303px;top:424px;font-size:13px;line-height:20px;color:#333;font-weight:normal;">20</div>
<div class="t" style="left:1403px;top:424px;font-size:13px;line-height:20px;color:#333;font-weight:normal;">--</div>
<div class="t" style="left:1503px;top:424px;font-size:13px;line-height:20px;color:#333;font-weight:normal;">admin</div>
<div class="t" style="left:1603px;top:424px;font-size:13px;line-height:20px;color:#333;font-weight:normal;">2019-11-20…</div>
<div class="t" style="left:1703px;top:424px;font-size:13px;line-height:20px;color:#333;font-weight:normal;">2019-11-12…</div>
<div class="t" style="left:1803px;top:424px;font-size:13px;line-height:20px;color:#333;font-weight:normal;">admin</div>
<div class="b" style="left:200px;top:454px;width:1720px;height:40px;background:#fff;border-bottom:1px solid #e8e8e8"></div>
<div class="b" style="left:223px;top:467px;width:14px;height:14px;background:#fff;border:1px solid #dfdfdf;border-radius:2px"></div>
<div class="t" style="left:303px;top:464px;font-size:13px;line-height:20px;color:#2362fb;font-weight:normal;">北海盗有限…</div>
<div class="t" style="left:403px;top:464px;font-size:13px;line-height:20px;color:#333;font-weight:normal;">转介绍</div>
<div class="t" style="left:503px;top:464px;font-size:13px;line-height:20px;color:#333;font-weight:normal;">165432133…</div>
<div class="t" style="left:603px;top:464px;font-size:13px;line-height:20px;color:#333;font-weight:normal;">56699825</div>
<div class="t" style="left:703px;top:464px;font-size:13px;line-height:20px;color:#333;font-weight:normal;">www.bhd.c…</div>
<div class="t" style="left:803px;top:464px;font-size:13px;line-height:20px;color:#333;font-weight:normal;">房地产</div>
<div class="t" style="left:903px;top:464px;font-size:13px;line-height:20px;color:#333;font-weight:normal;">A<span style="display:inline-block;width:13px;text-indent:4.5px;font-size:12px">(</span>重点客…</div>
<div class="t" style="left:1003px;top:464px;font-size:13px;line-height:20px;color:#333;font-weight:normal;">--</div>
<div class="t" style="left:1103px;top:464px;font-size:13px;line-height:20px;color:#333;font-weight:normal;">测试</div>
<svg class="b" style="left:1204px;top:467px;" width="12.5" height="12.5" viewBox="0 0 12.5 12.5"><circle cx="6.25" cy="6.25" r="6.25" fill="#f95b5b"/><path d="M3.3 3.3l5.9 5.9M9.2 3.3l-5.9 5.9" stroke="#fff" stroke-width="1" fill="none"/></svg>
<div class="t" style="left:1220.5px;top:464px;font-size:13px;line-height:20px;color:#333;font-weight:normal;">未成交</div>
<div class="t" style="left:1303px;top:464px;font-size:13px;line-height:20px;color:#333;font-weight:normal;">20</div>
<div class="t" style="left:1403px;top:464px;font-size:13px;line-height:20px;color:#333;font-weight:normal;">--</div>
<div class="t" style="left:1503px;top:464px;font-size:13px;line-height:20px;color:#333;font-weight:normal;">admin</div>
<div class="t" style="left:1603px;top:464px;font-size:13px;line-height:20px;color:#333;font-weight:normal;">2019-11-20…</div>
<div class="t" style="left:1703px;top:464px;font-size:13px;line-height:20px;color:#333;font-weight:normal;">2019-11-12…</div>
<div class="t" style="left:1803px;top:464px;font-size:13px;line-height:20px;color:#333;font-weight:normal;">admin</div>
<div class="b" style="left:200px;top:494px;width:1720px;height:40px;background:#fafafa;border-bottom:1px solid #e8e8e8"></div>
<div class="b" style="left:223px;top:507px;width:14px;height:14px;background:#fff;border:1px solid #dfdfdf;border-radius:2px"></div>
<div class="t" style="left:303px;top:504px;font-size:13px;line-height:20px;color:#2362fb;font-weight:normal;">上海零售业…</div>
<div class="t" style="left:403px;top:504px;font-size:13px;line-height:20px;color:#333;font-weight:normal;">线上询价</div>
<div class="t" style="left:503px;top:504px;font-size:13px;line-height:20px;color:#333;font-weight:normal;">156659896…</div>
<div class="t" style="left:603px;top:504px;font-size:13px;line-height:20px;color:#333;font-weight:normal;">1461414</div>
<div class="t" style="left:703px;top:504px;font-size:13px;line-height:20px;color:#333;font-weight:normal;">www.lsy.com</div>
<div class="t" style="left:803px;top:504px;font-size:13px;line-height:20px;color:#333;font-weight:normal;">金融业</div>
<div class="t" style="left:903px;top:504px;font-size:13px;line-height:20px;color:#333;font-weight:normal;">B<span style="display:inline-block;width:13px;text-indent:4.5px;font-size:12px">(</span>普通客…</div>
<div class="t" style="left:1003px;top:504px;font-size:13px;line-height:20px;color:#333;font-weight:normal;">--</div>
<div class="t" style="left:1103px;top:504px;font-size:13px;line-height:20px;color:#333;font-weight:normal;">测试</div>
<svg class="b" style="left:1204px;top:507px;" width="12.5" height="12.5" viewBox="0 0 12.5 12.5"><circle cx="6.25" cy="6.25" r="6.25" fill="#f95b5b"/><path d="M3.3 3.3l5.9 5.9M9.2 3.3l-5.9 5.9" stroke="#fff" stroke-width="1" fill="none"/></svg>
<div class="t" style="left:1220.5px;top:504px;font-size:13px;line-height:20px;color:#333;font-weight:normal;">未成交</div>
<div class="t" style="left:1303px;top:504px;font-size:13px;line-height:20px;color:#333;font-weight:normal;">20</div>
<div class="t" style="left:1403px;top:504px;font-size:13px;line-height:20px;color:#333;font-weight:normal;">--</div>
<div class="t" style="left:1503px;top:504px;font-size:13px;line-height:20px;color:#333;font-weight:normal;">admin</div>
<div class="t" style="left:1603px;top:504px;font-size:13px;line-height:20px;color:#333;font-weight:normal;">2019-11-20…</div>
<div class="t" style="left:1703px;top:504px;font-size:13px;line-height:20px;color:#333;font-weight:normal;">2019-11-12…</div>
<div class="t" style="left:1803px;top:504px;font-size:13px;line-height:20px;color:#333;font-weight:normal;">admin</div>
<div class="b" style="left:200px;top:534px;width:1720px;height:40px;background:#fff;border-bottom:1px solid #e8e8e8"></div>
<div class="b" style="left:223px;top:547px;width:14px;height:14px;background:#fff;border:1px solid #dfdfdf;border-radius:2px"></div>
<div class="t" style="left:303px;top:544px;font-size:13px;line-height:20px;color:#2362fb;font-weight:normal;">北京海淀有…</div>
<div class="t" style="left:403px;top:544px;font-size:13px;line-height:20px;color:#333;font-weight:normal;">转介绍</div>
<div class="t" style="left:503px;top:544px;font-size:13px;line-height:20px;color:#333;font-weight:normal;">196966598…</div>
<div class="t" style="left:603px;top:544px;font-size:13px;line-height:20px;color:#333;font-weight:normal;">5856625</div>
<div class="t" style="left:703px;top:544px;font-size:13px;line-height:20px;color:#333;font-weight:normal;">www.bjhd.c…</div>
<div class="t" style="left:803px;top:544px;font-size:13px;line-height:20px;color:#333;font-weight:normal;">运输/物流</div>
<div class="t" style="left:903px;top:544px;font-size:13px;line-height:20px;color:#333;font-weight:normal;">A<span style="display:inline-block;width:13px;text-indent:4.5px;font-size:12px">(</span>重点客…</div>
<div class="t" style="left:1003px;top:544px;font-size:13px;line-height:20px;color:#333;font-weight:normal;">--</div>
<div class="t" style="left:1103px;top:544px;font-size:13px;line-height:20px;color:#333;font-weight:normal;">测试</div>
<svg class="b" style="left:1204px;top:547px;" width="12.5" height="12.5" viewBox="0 0 12.5 12.5"><circle cx="6.25" cy="6.25" r="6.25" fill="#f95b5b"/><path d="M3.3 3.3l5.9 5.9M9.2 3.3l-5.9 5.9" stroke="#fff" stroke-width="1" fill="none"/></svg>
<div class="t" style="left:1220.5px;top:544px;font-size:13px;line-height:20px;color:#333;font-weight:normal;">未成交</div>
<div class="t" style="left:1303px;top:544px;font-size:13px;line-height:20px;color:#333;font-weight:normal;">20</div>
<div class="t" style="left:1403px;top:544px;font-size:13px;line-height:20px;color:#333;font-weight:normal;">--</div>
<div class="t" style="left:1503px;top:544px;font-size:13px;line-height:20px;color:#333;font-weight:normal;">admin</div>
<div class="t" style="left:1603px;top:544px;font-size:13px;line-height:20px;color:#333;font-weight:normal;">2019-11-20…</div>
<div class="t" style="left:1703px;top:544px;font-size:13px;line-height:20px;color:#333;font-weight:normal;">2019-11-12…</div>
<div class="t" style="left:1803px;top:544px;font-size:13px;line-height:20px;color:#333;font-weight:normal;">admin</div>
<div class="b" style="left:200px;top:574px;width:1720px;height:40px;background:#fafafa;border-bottom:1px solid #e8e8e8"></div>
<div class="b" style="left:223px;top:587px;width:14px;height:14px;background:#fff;border:1px solid #dfdfdf;border-radius:2px"></div>
<div class="t" style="left:303px;top:584px;font-size:13px;line-height:20px;color:#2362fb;font-weight:normal;">北天堂有限…</div>
<div class="t" style="left:403px;top:584px;font-size:13px;line-height:20px;color:#333;font-weight:normal;">线上注册</div>
<div class="t" style="left:503px;top:584px;font-size:13px;line-height:20px;color:#333;font-weight:normal;">145555956…</div>
<div class="t" style="left:603px;top:584px;font-size:13px;line-height:20px;color:#333;font-weight:normal;">7777777</div>
<div class="t" style="left:703px;top:584px;font-size:13px;line-height:20px;color:#333;font-weight:normal;">www.btt.com</div>
<div class="t" style="left:803px;top:584px;font-size:13px;line-height:20px;color:#333;font-weight:normal;">政府</div>
<div class="t" style="left:903px;top:584px;font-size:13px;line-height:20px;color:#333;font-weight:normal;">A<span style="display:inline-block;width:13px;text-indent:4.5px;font-size:12px">(</span>重点客…</div>
<div class="t" style="left:1003px;top:584px;font-size:13px;line-height:20px;color:#333;font-weight:normal;">2019-11-21…</div>
<div class="t" style="left:1103px;top:584px;font-size:13px;line-height:20px;color:#333;font-weight:normal;">测试</div>
<svg class="b" style="left:1204px;top:587px;" width="12.5" height="12.5" viewBox="0 0 12.5 12.5"><circle cx="6.25" cy="6.25" r="6.25" fill="#f95b5b"/><path d="M3.3 3.3l5.9 5.9M9.2 3.3l-5.9 5.9" stroke="#fff" stroke-width="1" fill="none"/></svg>
<div class="t" style="left:1220.5px;top:584px;font-size:13px;line-height:20px;color:#333;font-weight:normal;">未成交</div>
<div class="t" style="left:1303px;top:584px;font-size:13px;line-height:20px;color:#333;font-weight:normal;">20</div>
<div class="t" style="left:1403px;top:584px;font-size:13px;line-height:20px;color:#333;font-weight:normal;">--</div>
<div class="t" style="left:1503px;top:584px;font-size:13px;line-height:20px;color:#333;font-weight:normal;">admin</div>
<div class="t" style="left:1603px;top:584px;font-size:13px;line-height:20px;color:#333;font-weight:normal;">2019-11-20…</div>
<div class="t" style="left:1703px;top:584px;font-size:13px;line-height:20px;color:#333;font-weight:normal;">2019-11-12…</div>
<div class="t" style="left:1803px;top:584px;font-size:13px;line-height:20px;color:#333;font-weight:normal;">admin</div>
<div class="b" style="left:200px;top:614px;width:1720px;height:40px;background:#fff;border-bottom:1px solid #e8e8e8"></div>
<div class="b" style="left:223px;top:627px;width:14px;height:14px;background:#fff;border:1px solid #dfdfdf;border-radius:2px"></div>
<div class="t" style="left:303px;top:624px;font-size:13px;line-height:20px;color:#2362fb;font-weight:normal;">上山有限公司</div>
<div class="t" style="left:403px;top:624px;font-size:13px;line-height:20px;color:#333;font-weight:normal;">线上询价</div>
<div class="t" style="left:503px;top:624px;font-size:13px;line-height:20px;color:#333;font-weight:normal;">186256583…</div>
<div class="t" style="left:603px;top:624px;font-size:13px;line-height:20px;color:#333;font-weight:normal;">254685</div>
<div class="t" style="left:703px;top:624px;font-size:13px;line-height:20px;color:#333;font-weight:normal;">www.shan…</div>
<div class="t" style="left:803px;top:624px;font-size:13px;line-height:20px;color:#333;font-weight:normal;">商业服务</div>
<div class="t" style="left:903px;top:624px;font-size:13px;line-height:20px;color:#333;font-weight:normal;">A<span style="display:inline-block;width:13px;text-indent:4.5px;font-size:12px">(</span>重点客…</div>
<div class="t" style="left:1003px;top:624px;font-size:13px;line-height:20px;color:#333;font-weight:normal;">2019-11-20…</div>
<div class="t" style="left:1103px;top:624px;font-size:13px;line-height:20px;color:#333;font-weight:normal;">测试</div>
<svg class="b" style="left:1204px;top:627px;" width="12.5" height="12.5" viewBox="0 0 12.5 12.5"><circle cx="6.25" cy="6.25" r="6.25" fill="#f95b5b"/><path d="M3.3 3.3l5.9 5.9M9.2 3.3l-5.9 5.9" stroke="#fff" stroke-width="1" fill="none"/></svg>
<div class="t" style="left:1220.5px;top:624px;font-size:13px;line-height:20px;color:#333;font-weight:normal;">未成交</div>
<div class="t" style="left:1303px;top:624px;font-size:13px;line-height:20px;color:#333;font-weight:normal;">20</div>
<div class="t" style="left:1403px;top:624px;font-size:13px;line-height:20px;color:#333;font-weight:normal;">--</div>
<div class="t" style="left:1503px;top:624px;font-size:13px;line-height:20px;color:#333;font-weight:normal;">admin</div>
<div class="t" style="left:1603px;top:624px;font-size:13px;line-height:20px;color:#333;font-weight:normal;">2019-11-20…</div>
<div class="t" style="left:1703px;top:624px;font-size:13px;line-height:20px;color:#333;font-weight:normal;">2019-11-12…</div>
<div class="t" style="left:1803px;top:624px;font-size:13px;line-height:20px;color:#333;font-weight:normal;">admin</div>
<div class="b" style="left:200px;top:654px;width:1720px;height:40px;background:#e8effd;border-bottom:1px solid #e8e8e8"></div>
<div class="b" style="left:200px;top:654px;width:2px;height:39px;background:#2362fb"></div>
<div class="b" style="left:223px;top:667px;width:14px;height:14px;background:#2362fb;border-radius:2px"></div>
<svg class="b" style="left:223px;top:667px;" width="14" height="14" viewBox="0 0 14 14"><path d="M3.2 7.2l2.6 2.6 5-5" stroke="#fff" stroke-width="1.4" fill="none"/></svg>
<svg class="b" style="left:266px;top:665px;" width="14" height="14" viewBox="0 0 14 14"><circle cx="7" cy="7" r="7" fill="#fa6845"/><path d="M9.4 5.1C9.4 4 8.4 3.5 7 3.5 5.6 3.5 4.6 4.1 4.6 5.2 4.6 6.4 5.9 6.8 7 7 8.2 7.2 9.5 7.6 9.5 8.9 9.5 10 8.5 10.6 7 10.6 5.5 10.6 4.5 10 4.5 8.9M7 2.1V12" stroke="#fff" stroke-width="1.3" fill="none"/></svg>
<div class="t" style="left:303px;top:664px;font-size:13px;line-height:20px;color:#2362fb;font-weight:normal;">A1</div>
<div class="t" style="left:403px;top:664px;font-size:13px;line-height:20px;color:#333;font-weight:normal;">广告</div>
<div class="t" style="left:503px;top:664px;font-size:13px;line-height:20px;color:#333;font-weight:normal;">183395656…</div>
<div class="t" style="left:603px;top:664px;font-size:13px;line-height:20px;color:#333;font-weight:normal;">2545312</div>
<div class="t" style="left:703px;top:664px;font-size:13px;line-height:20px;color:#333;font-weight:normal;">www.A1.com</div>
<div class="t" style="left:803px;top:664px;font-size:13px;line-height:20px;color:#333;font-weight:normal;">房地产</div>
<div class="t" style="left:903px;top:664px;font-size:13px;line-height:20px;color:#333;font-weight:normal;">B<span style="display:inline-block;width:13px;text-indent:4.5px;font-size:12px">(</span>普通客…</div>
<div class="t" style="left:1003px;top:664px;font-size:13px;line-height:20px;color:#333;font-weight:normal;">2019-11-15…</div>
<div class="t" style="left:1103px;top:664px;font-size:13px;line-height:20px;color:#333;font-weight:normal;">测试</div>
<svg class="b" style="left:1204px;top:667px;" width="12.5" height="12.5" viewBox="0 0 12.5 12.5"><circle cx="6.25" cy="6.25" r="6.25" fill="#20b559"/><path d="M3.3 6.3l2 2 3.8-3.8" stroke="#fff" stroke-width="1.2" fill="none"/></svg>
<div class="t" style="left:1220.5px;top:664px;font-size:13px;line-height:20px;color:#333;font-weight:normal;">已成交</div>
<div class="t" style="left:1303px;top:664px;font-size:13px;line-height:20px;color:#333;font-weight:normal;"></div>
<div class="t" style="left:1403px;top:664px;font-size:13px;line-height:20px;color:#333;font-weight:normal;">2019-11-15…</div>
<div class="t" style="left:1503px;top:664px;font-size:13px;line-height:20px;color:#333;font-weight:normal;">admin</div>
<div class="t" style="left:1603px;top:664px;font-size:13px;line-height:20px;color:#333;font-weight:normal;">2019-11-20…</div>
<div class="t" style="left:1703px;top:664px;font-size:13px;line-height:20px;color:#333;font-weight:normal;">2019-11-12…</div>
<div class="t" style="left:1803px;top:664px;font-size:13px;line-height:20px;color:#333;font-weight:normal;">admin</div>
<div class="b" style="left:200px;top:694px;width:1720px;height:40px;background:#fff;border-bottom:1px solid #e8e8e8"></div>
<div class="b" style="left:223px;top:707px;width:14px;height:14px;background:#fff;border:1px solid #dfdfdf;border-radius:2px"></div>
<div class="t" style="left:303px;top:704px;font-size:13px;line-height:20px;color:#2362fb;font-weight:normal;">新宇宙有限…</div>
<div class="t" style="left:403px;top:704px;font-size:13px;line-height:20px;color:#333;font-weight:normal;">线上注册</div>
<div class="t" style="left:503px;top:704px;font-size:13px;line-height:20px;color:#333;font-weight:normal;">159696255…</div>
<div class="t" style="left:603px;top:704px;font-size:13px;line-height:20px;color:#333;font-weight:normal;">965685</div>
<div class="t" style="left:703px;top:704px;font-size:13px;line-height:20px;color:#333;font-weight:normal;">www.cs28.…</div>
<div class="t" style="left:803px;top:704px;font-size:13px;line-height:20px;color:#333;font-weight:normal;">金融业</div>
<div class="t" style="left:903px;top:704px;font-size:13px;line-height:20px;color:#333;font-weight:normal;">B<span style="display:inline-block;width:13px;text-indent:4.5px;font-size:12px">(</span>普通客…</div>
<div class="t" style="left:1003px;top:704px;font-size:13px;line-height:20px;color:#333;font-weight:normal;">2019-11-19…</div>
<div class="t" style="left:1103px;top:704px;font-size:13px;line-height:20px;color:#333;font-weight:normal;">测试</div>
<svg class="b" style="left:1204px;top:707px;" width="12.5" height="12.5" viewBox="0 0 12.5 12.5"><circle cx="6.25" cy="6.25" r="6.25" fill="#f95b5b"/><path d="M3.3 3.3l5.9 5.9M9.2 3.3l-5.9 5.9" stroke="#fff" stroke-width="1" fill="none"/></svg>
<div class="t" style="left:1220.5px;top:704px;font-size:13px;line-height:20px;color:#333;font-weight:normal;">未成交</div>
<div class="t" style="left:1303px;top:704px;font-size:13px;line-height:20px;color:#333;font-weight:normal;"></div>
<div class="t" style="left:1403px;top:704px;font-size:13px;line-height:20px;color:#333;font-weight:normal;">2019-11-19…</div>
<div class="t" style="left:1503px;top:704px;font-size:13px;line-height:20px;color:#333;font-weight:normal;">荒</div>
<div class="t" style="left:1603px;top:704px;font-size:13px;line-height:20px;color:#333;font-weight:normal;">2019-11-11…</div>
<div class="t" style="left:1703px;top:704px;font-size:13px;line-height:20px;color:#333;font-weight:normal;">2019-11-11…</div>
<div class="t" style="left:1803px;top:704px;font-size:13px;line-height:20px;color:#333;font-weight:normal;">荒</div>
<div class="b" style="left:200px;top:734px;width:1720px;height:40px;background:#fafafa;border-bottom:1px solid #e8e8e8"></div>
<div class="b" style="left:223px;top:747px;width:14px;height:14px;background:#fff;border:1px solid #dfdfdf;border-radius:2px"></div>
<div class="t" style="left:303px;top:744px;font-size:13px;line-height:20px;color:#2362fb;font-weight:normal;">O</div>
<div class="t" style="left:403px;top:744px;font-size:13px;line-height:20px;color:#333;font-weight:normal;">电话咨询</div>
<div class="t" style="left:503px;top:744px;font-size:13px;line-height:20px;color:#333;font-weight:normal;">198765410…</div>
<div class="t" style="left:603px;top:744px;font-size:13px;line-height:20px;color:#333;font-weight:normal;">987667</div>
<div class="t" style="left:703px;top:744px;font-size:13px;line-height:20px;color:#333;font-weight:normal;">www.cs14.…</div>
<div class="t" style="left:803px;top:744px;font-size:13px;line-height:20px;color:#333;font-weight:normal;">文化传媒</div>
<div class="t" style="left:903px;top:744px;font-size:13px;line-height:20px;color:#333;font-weight:normal;">C<span style="display:inline-block;width:13px;text-indent:4.5px;font-size:12px">(</span>非优先…</div>
<div class="t" style="left:1003px;top:744px;font-size:13px;line-height:20px;color:#333;font-weight:normal;">--</div>
<div class="t" style="left:1103px;top:744px;font-size:13px;line-height:20px;color:#333;font-weight:normal;">测试</div>
<svg class="b" style="left:1204px;top:747px;" width="12.5" height="12.5" viewBox="0 0 12.5 12.5"><circle cx="6.25" cy="6.25" r="6.25" fill="#f95b5b"/><path d="M3.3 3.3l5.9 5.9M9.2 3.3l-5.9 5.9" stroke="#fff" stroke-width="1" fill="none"/></svg>
<div class="t" style="left:1220.5px;top:744px;font-size:13px;line-height:20px;color:#333;font-weight:normal;">未成交</div>
<div class="t" style="left:1303px;top:744px;font-size:13px;line-height:20px;color:#333;font-weight:normal;"></div>
<div class="t" style="left:1403px;top:744px;font-size:13px;line-height:20px;color:#333;font-weight:normal;">--</div>
<div class="t" style="left:1503px;top:744px;font-size:13px;line-height:20px;color:#333;font-weight:normal;">昊</div>
<div class="t" style="left:1603px;top:744px;font-size:13px;line-height:20px;color:#333;font-weight:normal;">2019-11-11…</div>
<div class="t" style="left:1703px;top:744px;font-size:13px;line-height:20px;color:#333;font-weight:normal;">2019-11-09…</div>
<div class="t" style="left:1803px;top:744px;font-size:13px;line-height:20px;color:#333;font-weight:normal;">昊</div>
<div class="b" style="left:200px;top:774px;width:1720px;height:40px;background:#fff;border-bottom:1px solid #e8e8e8"></div>
<div class="b" style="left:223px;top:787px;width:14px;height:14px;background:#fff;border:1px solid #dfdfdf;border-radius:2px"></div>
<div class="t" style="left:303px;top:784px;font-size:13px;line-height:20px;color:#2362fb;font-weight:normal;">P</div>
<div class="t" style="left:403px;top:784px;font-size:13px;line-height:20px;color:#333;font-weight:normal;">电话咨询</div>
<div class="t" style="left:503px;top:784px;font-size:13px;line-height:20px;color:#333;font-weight:normal;">198765410…</div>
<div class="t" style="left:603px;top:784px;font-size:13px;line-height:20px;color:#333;font-weight:normal;">987668</div>
<div class="t" style="left:703px;top:784px;font-size:13px;line-height:20px;color:#333;font-weight:normal;">www.cs15.…</div>
<div class="t" style="left:803px;top:784px;font-size:13px;line-height:20px;color:#333;font-weight:normal;">政府</div>
<div class="t" style="left:903px;top:784px;font-size:13px;line-height:20px;color:#333;font-weight:normal;">C<span style="display:inline-block;width:13px;text-indent:4.5px;font-size:12px">(</span>非优先…</div>
<div class="t" style="left:1003px;top:784px;font-size:13px;line-height:20px;color:#333;font-weight:normal;">--</div>
<div class="t" style="left:1103px;top:784px;font-size:13px;line-height:20px;color:#333;font-weight:normal;">测试</div>
<svg class="b" style="left:1204px;top:787px;" width="12.5" height="12.5" viewBox="0 0 12.5 12.5"><circle cx="6.25" cy="6.25" r="6.25" fill="#f95b5b"/><path d="M3.3 3.3l5.9 5.9M9.2 3.3l-5.9 5.9" stroke="#fff" stroke-width="1" fill="none"/></svg>
<div class="t" style="left:1220.5px;top:784px;font-size:13px;line-height:20px;color:#333;font-weight:normal;">未成交</div>
<div class="t" style="left:1303px;top:784px;font-size:13px;line-height:20px;color:#333;font-weight:normal;"></div>
<div class="t" style="left:1403px;top:784px;font-size:13px;line-height:20px;color:#333;font-weight:normal;">--</div>
<div class="t" style="left:1503px;top:784px;font-size:13px;line-height:20px;color:#333;font-weight:normal;">昊</div>
<div class="t" style="left:1603px;top:784px;font-size:13px;line-height:20px;color:#333;font-weight:normal;">2019-11-11…</div>
<div class="t" style="left:1703px;top:784px;font-size:13px;line-height:20px;color:#333;font-weight:normal;">2019-11-09…</div>
<div class="t" style="left:1803px;top:784px;font-size:13px;line-height:20px;color:#333;font-weight:normal;">昊</div>
<svg class="b" style="left:200px;top:213px;" width="1680" height="602" viewBox="0 0 1680 602"><g fill="#f6f6f6"><rect x="54" y="40" width="1" height="1"/><rect x="92" y="40" width="1" height="1"/><rect x="192" y="40" width="1" height="1"/><rect x="292" y="40" width="1" height="1"/><rect x="392" y="40" width="1" height="1"/><rect x="492" y="40" width="1" height="1"/><rect x="592" y="40" width="1" height="1"/><rect x="692" y="40" width="1" height="1"/><rect x="792" y="40" width="1" height="1"/><rect x="892" y="40" width="1" height="1"/><rect x="992" y="40" width="1" height="1"/><rect x="1092" y="40" width="1" height="1"/><rect x="1192" y="40" width="1" height="1"/><rect x="1292" y="40" width="1" height="1"/><rect x="1392" y="40" width="1" height="1"/><rect x="1492" y="40" width="1" height="1"/><rect x="1592" y="40" width="1" height="1"/><rect x="54" y="80" width="1" height="1"/><rect x="92" y="80" width="1" height="1"/><rect x="192" y="80" width="1" height="1"/><rect x="292" y="80" width="1" height="1"/><rect x="392" y="80" width="1" height="1"/><rect x="492" y="80" width="1" height="1"/><rect x="592" y="80" width="1" height="1"/><rect x="692" y="80" width="1" height="1"/><rect x="792" y="80" width="1" height="1"/><rect x="892" y="80" width="1" height="1"/><rect x="992" y="80" width="1" height="1"/><rect x="1092" y="80" width="1" height="1"/><rect x="1192" y="80" width="1" height="1"/><rect x="1292" y="80" width="1" height="1"/><rect x="1392" y="80" width="1" height="1"/><rect x="1492" y="80" width="1" height="1"/><rect x="1592" y="80" width="1" height="1"/><rect x="54" y="120" width="1" height="1"/><rect x="92" y="120" width="1" height="1"/><rect x="192" y="120" width="1" height="1"/><rect x="292" y="120" width="1" height="1"/><rect x="392" y="120" width="1" height="1"/><rect x="492" y="120" width="1" height="1"/><rect x="592" y="120" width="1" height="1"/><rect x="692" y="120" width="1" height="1"/><rect x="792" y="120" width="1" height="1"/><rect x="892" y="120" width="1" height="1"/><rect x="992" y="120" width="1" height="1"/><rect x="1092" y="120" width="1" height="1"/><rect x="1192" y="120" width="1" height="1"/><rect x="1292" y="120" width="1" height="1"/><rect x="1392" y="120" width="1" height="1"/><rect x="1492" y="120" width="1" height="1"/><rect x="1592" y="120" width="1" height="1"/><rect x="54" y="160" width="1" height="1"/><rect x="92" y="160" width="1" height="1"/><rect x="192" y="160" width="1" height="1"/><rect x="292" y="160" width="1" height="1"/><rect x="392" y="160" width="1" height="1"/><rect x="492" y="160" width="1" height="1"/><rect x="592" y="160" width="1" height="1"/><rect x="692" y="160" width="1" height="1"/><rect x="792" y="160" width="1" height="1"/><rect x="892" y="160" width="1" height="1"/><rect x="992" y="160" width="1" height="1"/><rect x="1092" y="160" width="1" height="1"/><rect x="1192" y="160" width="1" height="1"/><rect x="1292" y="160" width="1" height="1"/><rect x="1392" y="160" width="1" height="1"/><rect x="1492" y="160" width="1" height="1"/><rect x="1592" y="160" width="1" height="1"/><rect x="54" y="200" width="1" height="1"/><rect x="92" y="200" width="1" height="1"/><rect x="192" y="200" width="1" height="1"/><rect x="292" y="200" width="1" height="1"/><rect x="392" y="200" width="1" height="1"/><rect x="492" y="200" width="1" height="1"/><rect x="592" y="200" width="1" height="1"/><rect x="692" y="200" width="1" height="1"/><rect x="792" y="200" width="1" height="1"/><rect x="892" y="200" width="1" height="1"/><rect x="992" y="200" width="1" height="1"/><rect x="1092" y="200" width="1" height="1"/><rect x="1192" y="200" width="1" height="1"/><rect x="1292" y="200" width="1" height="1"/><rect x="1392" y="200" width="1" height="1"/><rect x="1492" y="200" width="1" height="1"/><rect x="1592" y="200" width="1" height="1"/><rect x="54" y="240" width="1" height="1"/><rect x="92" y="240" width="1" height="1"/><rect x="192" y="240" width="1" height="1"/><rect x="292" y="240" width="1" height="1"/><rect x="392" y="240" width="1" height="1"/><rect x="492" y="240" width="1" height="1"/><rect x="592" y="240" width="1" height="1"/><rect x="692" y="240" width="1" height="1"/><rect x="792" y="240" width="1" height="1"/><rect x="892" y="240" width="1" height="1"/><rect x="992" y="240" width="1" height="1"/><rect x="1092" y="240" width="1" height="1"/><rect x="1192" y="240" width="1" height="1"/><rect x="1292" y="240" width="1" height="1"/><rect x="1392" y="240" width="1" height="1"/><rect x="1492" y="240" width="1" height="1"/><rect x="1592" y="240" width="1" height="1"/><rect x="54" y="280" width="1" height="1"/><rect x="92" y="280" width="1" height="1"/><rect x="192" y="280" width="1" height="1"/><rect x="292" y="280" width="1" height="1"/><rect x="392" y="280" width="1" height="1"/><rect x="492" y="280" width="1" height="1"/><rect x="592" y="280" width="1" height="1"/><rect x="692" y="280" width="1" height="1"/><rect x="792" y="280" width="1" height="1"/><rect x="892" y="280" width="1" height="1"/><rect x="992" y="280" width="1" height="1"/><rect x="1092" y="280" width="1" height="1"/><rect x="1192" y="280" width="1" height="1"/><rect x="1292" y="280" width="1" height="1"/><rect x="1392" y="280" width="1" height="1"/><rect x="1492" y="280" width="1" height="1"/><rect x="1592" y="280" width="1" height="1"/><rect x="54" y="320" width="1" height="1"/><rect x="92" y="320" width="1" height="1"/><rect x="192" y="320" width="1" height="1"/><rect x="292" y="320" width="1" height="1"/><rect x="392" y="320" width="1" height="1"/><rect x="492" y="320" width="1" height="1"/><rect x="592" y="320" width="1" height="1"/><rect x="692" y="320" width="1" height="1"/><rect x="792" y="320" width="1" height="1"/><rect x="892" y="320" width="1" height="1"/><rect x="992" y="320" width="1" height="1"/><rect x="1092" y="320" width="1" height="1"/><rect x="1192" y="320" width="1" height="1"/><rect x="1292" y="320" width="1" height="1"/><rect x="1392" y="320" width="1" height="1"/><rect x="1492" y="320" width="1" height="1"/><rect x="1592" y="320" width="1" height="1"/><rect x="54" y="360" width="1" height="1"/><rect x="92" y="360" width="1" height="1"/><rect x="192" y="360" width="1" height="1"/><rect x="292" y="360" width="1" height="1"/><rect x="392" y="360" width="1" height="1"/><rect x="492" y="360" width="1" height="1"/><rect x="592" y="360" width="1" height="1"/><rect x="692" y="360" width="1" height="1"/><rect x="792" y="360" width="1" height="1"/><rect x="892" y="360" width="1" height="1"/><rect x="992" y="360" width="1" height="1"/><rect x="1092" y="360" width="1" height="1"/><rect x="1192" y="360" width="1" height="1"/><rect x="1292" y="360" width="1" height="1"/><rect x="1392" y="360" width="1" height="1"/><rect x="1492" y="360" width="1" height="1"/><rect x="1592" y="360" width="1" height="1"/><rect x="54" y="400" width="1" height="1"/><rect x="92" y="400" width="1" height="1"/><rect x="192" y="400" width="1" height="1"/><rect x="292" y="400" width="1" height="1"/><rect x="392" y="400" width="1" height="1"/><rect x="492" y="400" width="1" height="1"/><rect x="592" y="400" width="1" height="1"/><rect x="692" y="400" width="1" height="1"/><rect x="792" y="400" width="1" height="1"/><rect x="892" y="400" width="1" height="1"/><rect x="992" y="400" width="1" height="1"/><rect x="1092" y="400" width="1" height="1"/><rect x="1192" y="400" width="1" height="1"/><rect x="1292" y="400" width="1" height="1"/><rect x="1392" y="400" width="1" height="1"/><rect x="1492" y="400" width="1" height="1"/><rect x="1592" y="400" width="1" height="1"/><rect x="54" y="440" width="1" height="1"/><rect x="92" y="440" width="1" height="1"/><rect x="192" y="440" width="1" height="1"/><rect x="292" y="440" width="1" height="1"/><rect x="392" y="440" width="1" height="1"/><rect x="492" y="440" width="1" height="1"/><rect x="592" y="440" width="1" height="1"/><rect x="692" y="440" width="1" height="1"/><rect x="792" y="440" width="1" height="1"/><rect x="892" y="440" width="1" height="1"/><rect x="992" y="440" width="1" height="1"/><rect x="1092" y="440" width="1" height="1"/><rect x="1192" y="440" width="1" height="1"/><rect x="1292" y="440" width="1" height="1"/><rect x="1392" y="440" width="1" height="1"/><rect x="1492" y="440" width="1" height="1"/><rect x="1592" y="440" width="1" height="1"/><rect x="54" y="480" width="1" height="1"/><rect x="92" y="480" width="1" height="1"/><rect x="192" y="480" width="1" height="1"/><rect x="292" y="480" width="1" height="1"/><rect x="392" y="480" width="1" height="1"/><rect x="492" y="480" width="1" height="1"/><rect x="592" y="480" width="1" height="1"/><rect x="692" y="480" width="1" height="1"/><rect x="792" y="480" width="1" height="1"/><rect x="892" y="480" width="1" height="1"/><rect x="992" y="480" width="1" height="1"/><rect x="1092" y="480" width="1" height="1"/><rect x="1192" y="480" width="1" height="1"/><rect x="1292" y="480" width="1" height="1"/><rect x="1392" y="480" width="1" height="1"/><rect x="1492" y="480" width="1" height="1"/><rect x="1592" y="480" width="1" height="1"/><rect x="54" y="520" width="1" height="1"/><rect x="92" y="520" width="1" height="1"/><rect x="192" y="520" width="1" height="1"/><rect x="292" y="520" width="1" height="1"/><rect x="392" y="520" width="1" height="1"/><rect x="492" y="520" width="1" height="1"/><rect x="592" y="520" width="1" height="1"/><rect x="692" y="520" width="1" height="1"/><rect x="792" y="520" width="1" height="1"/><rect x="892" y="520" width="1" height="1"/><rect x="992" y="520" width="1" height="1"/><rect x="1092" y="520" width="1" height="1"/><rect x="1192" y="520" width="1" height="1"/><rect x="1292" y="520" width="1" height="1"/><rect x="1392" y="520" width="1" height="1"/><rect x="1492" y="520" width="1" height="1"/><rect x="1592" y="520" width="1" height="1"/><rect x="54" y="560" width="1" height="1"/><rect x="92" y="560" width="1" height="1"/><rect x="192" y="560" width="1" height="1"/><rect x="292" y="560" width="1" height="1"/><rect x="392" y="560" width="1" height="1"/><rect x="492" y="560" width="1" height="1"/><rect x="592" y="560" width="1" height="1"/><rect x="692" y="560" width="1" height="1"/><rect x="792" y="560" width="1" height="1"/><rect x="892" y="560" width="1" height="1"/><rect x="992" y="560" width="1" height="1"/><rect x="1092" y="560" width="1" height="1"/><rect x="1192" y="560" width="1" height="1"/><rect x="1292" y="560" width="1" height="1"/><rect x="1392" y="560" width="1" height="1"/><rect x="1492" y="560" width="1" height="1"/><rect x="1592" y="560" width="1" height="1"/><rect x="54" y="600" width="1" height="1"/><rect x="92" y="600" width="1" height="1"/><rect x="192" y="600" width="1" height="1"/><rect x="292" y="600" width="1" height="1"/><rect x="392" y="600" width="1" height="1"/><rect x="492" y="600" width="1" height="1"/><rect x="592" y="600" width="1" height="1"/><rect x="692" y="600" width="1" height="1"/><rect x="792" y="600" width="1" height="1"/><rect x="892" y="600" width="1" height="1"/><rect x="992" y="600" width="1" height="1"/><rect x="1092" y="600" width="1" height="1"/><rect x="1192" y="600" width="1" height="1"/><rect x="1292" y="600" width="1" height="1"/><rect x="1392" y="600" width="1" height="1"/><rect x="1492" y="600" width="1" height="1"/><rect x="1592" y="600" width="1" height="1"/></g></svg>
<div class="b" style="left:1870px;top:172px;width:10px;height:722px;background:linear-gradient(to right,rgba(0,0,0,0),rgba(0,0,0,0.06))"></div>
<div class="b" style="left:1880px;top:214px;width:40px;height:40px;background:#fff;border-bottom:1px solid #e8e8e8"></div>
<div class="b" style="left:1880px;top:254px;width:40px;height:40px;background:#fafafa;border-bottom:1px solid #e8e8e8"></div>
<div class="b" style="left:1880px;top:294px;width:40px;height:40px;background:#fff;border-bottom:1px solid #e8e8e8"></div>
<div class="b" style="left:1880px;top:334px;width:40px;height:40px;background:#fafafa;border-bottom:1px solid #e8e8e8"></div>
<div class="b" style="left:1880px;top:374px;width:40px;height:40px;background:#fff;border-bottom:1px solid #e8e8e8"></div>
<div class="b" style="left:1880px;top:414px;width:40px;height:40px;background:#fafafa;border-bottom:1px solid #e8e8e8"></div>
<div class="b" style="left:1880px;top:454px;width:40px;height:40px;background:#fff;border-bottom:1px solid #e8e8e8"></div>
<div class="b" style="left:1880px;top:494px;width:40px;height:40px;background:#fafafa;border-bottom:1px solid #e8e8e8"></div>
<div class="b" style="left:1880px;top:534px;width:40px;height:40px;background:#fff;border-bottom:1px solid #e8e8e8"></div>
<div class="b" style="left:1880px;top:574px;width:40px;height:40px;background:#fafafa;border-bottom:1px solid #e8e8e8"></div>
<div class="b" style="left:1880px;top:614px;width:40px;height:40px;background:#fff;border-bottom:1px solid #e8e8e8"></div>
<div class="b" style="left:1880px;top:654px;width:40px;height:40px;background:#e8effd;border-bottom:1px solid #e8e8e8"></div>
<div class="b" style="left:1880px;top:694px;width:40px;height:40px;background:#fff;border-bottom:1px solid #e8e8e8"></div>
<div class="b" style="left:1880px;top:734px;width:40px;height:40px;background:#fafafa;border-bottom:1px solid #e8e8e8"></div>
<div class="b" style="left:1880px;top:774px;width:40px;height:40px;background:#fff;border-bottom:1px solid #e8e8e8"></div>
<div class="b" style="left:1880px;top:813px;width:40px;height:81px;background:#fff"></div>
<div class="b" style="left:200px;top:894px;width:1720px;height:7px;background:#eeeff1"></div>
<div class="b" style="left:200px;top:894px;width:1632px;height:7px;background:#c5cfd9;border-radius:4px"></div>
<div class="b" style="left:1332px;top:908px;width:30px;height:28px;background:#f4f4f5;border-radius:2px"></div>
<svg class="b" style="left:1343px;top:917px;" width="7" height="10" viewBox="0 0 7 10"><path d="M5.8 0.5L1.2 5 5.8 9.5" stroke="#c0c4cc" stroke-width="1.2" fill="none"/></svg>
<div class="b" style="left:1372px;top:908px;width:30px;height:28px;background:#f4f4f5;border:1px solid #2362fb;border-radius:2px"></div>
<div class="t" style="left:1372px;top:913px;font-size:13px;line-height:20px;color:#2362fb;font-weight:bold;width:30px;text-align:center">1</div>
<div class="b" style="left:1412px;top:908px;width:30px;height:28px;background:#f4f4f5;border-radius:2px"></div>
<div class="t" style="left:1412px;top:913px;font-size:13px;line-height:20px;color:#606266;font-weight:bold;width:30px;text-align:center">2</div>
<div class="b" style="left:1452px;top:908px;width:30px;height:28px;background:#f4f4f5;border-radius:2px"></div>
<div class="t" style="left:1452px;top:913px;font-size:13px;line-height:20px;color:#606266;font-weight:bold;width:30px;text-align:center">3</div>
<div class="b" style="left:1492px;top:908px;width:30px;height:28px;background:#f4f4f5;border-radius:2px"></div>
<svg class="b" style="left:1503.5px;top:917px;" width="7" height="10" viewBox="0 0 7 10"><path d="M1.2 0.5L5.8 5 1.2 9.5" stroke="#303133" stroke-width="1.2" fill="none"/></svg>
<div class="b" style="left:1532px;top:908px;width:100px;height:28px;background:#fff;border:1px solid #dcdfe6;border-radius:3px"></div>
<div class="t" style="left:1552px;top:913px;font-size:13px;line-height:20px;color:#606266;font-weight:normal;">15条/页</div>
<svg class="b" style="left:1615.5px;top:920px;" width="8" height="5" viewBox="0 0 8 5"><path d="M0.5 0.5L4 4 7.5 0.5" stroke="#c0c4cc" stroke-width="1" fill="none"/></svg>
<div class="t" style="left:1647px;top:913px;font-size:12px;line-height:20px;color:#606266;font-weight:normal;">共 39 条</div>
<div class="t" style="left:1725px;top:913px;font-size:12px;line-height:20px;color:#606266;font-weight:normal;">前往</div>
<div class="b" style="left:1753px;top:908px;width:46px;height:28px;background:#fff;border:1px solid #dcdfe6;border-radius:3px"></div>
<div class="t" style="left:1753px;top:913px;font-size:13px;line-height:20px;color:#606266;font-weight:normal;width:46px;text-align:center">1</div>
<div class="t" style="left:1803px;top:913px;font-size:12px;line-height:20px;color:#606266;font-weight:normal;">页</div>
</body></html>
